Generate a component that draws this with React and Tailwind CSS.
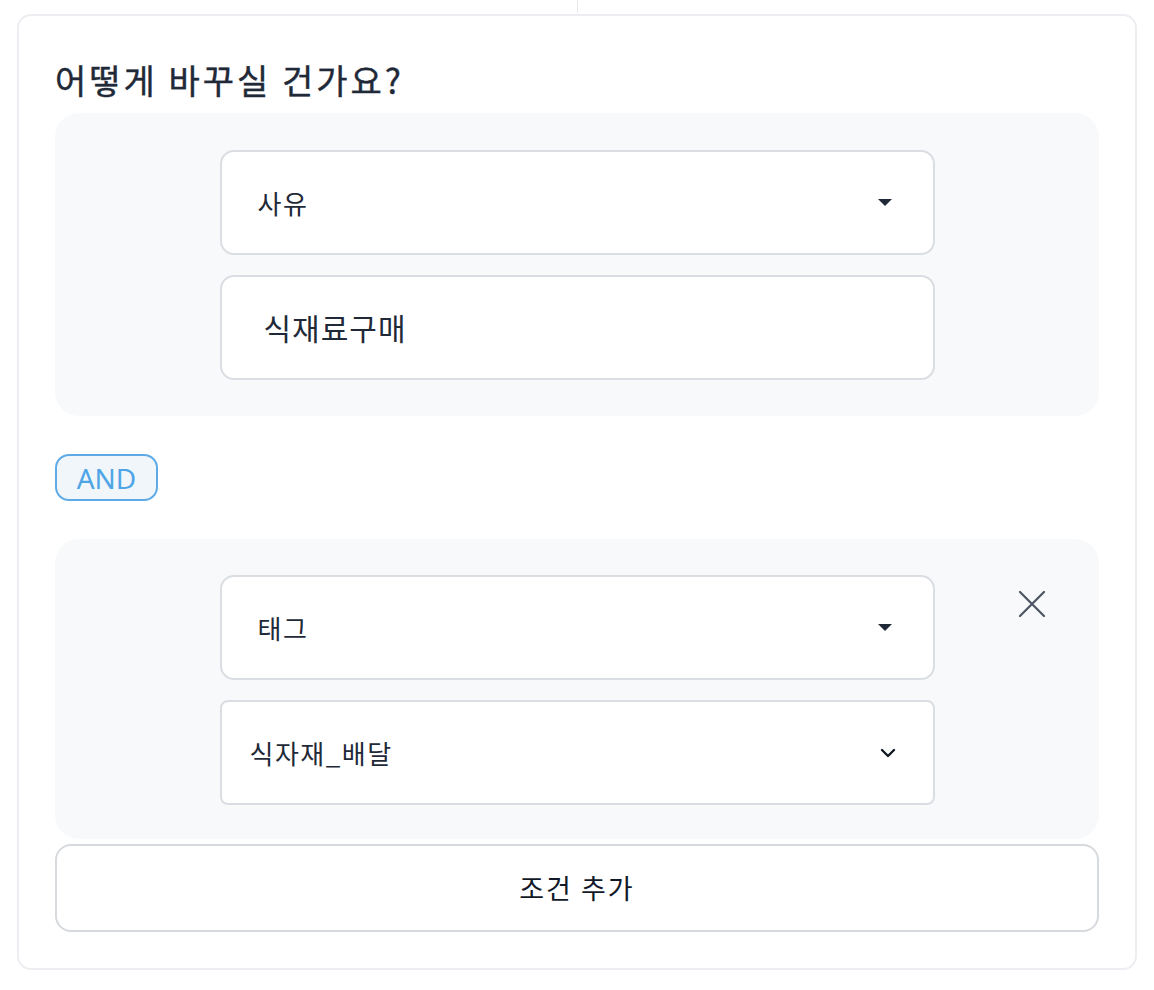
import React from "react";

const KR = { fontFamily: '"Noto Sans CJK KR", "Noto Sans", sans-serif' };

function Caret() {
  return (
    <svg width="16" height="9" viewBox="0 0 16 9" className="shrink-0">
      <path d="M1 1h14L8 8z" fill="#1f2937" />
    </svg>
  );
}

function Chevron() {
  return (
    <svg width="18" height="12" viewBox="0 0 18 12" className="shrink-0">
      <path d="M3 3l6 6 6-6" fill="none" stroke="#111827" strokeWidth="2.4" strokeLinecap="round" strokeLinejoin="round" />
    </svg>
  );
}

function SelectBox({ label }) {
  return (
    <div className="flex h-[105px] items-center justify-between rounded-[14px] border-2 border-[#dadde2] bg-white pl-[36px] pr-[40px]">
      <span className="text-[26px] tracking-[1.5px] text-[#1f2937]">{label}</span>
      <Caret />
    </div>
  );
}

export default function App() {
  return (
    <div className="min-h-[990px] bg-white pb-[20px]" style={KR}>
      <div className="flex justify-center">
        <div className="h-[13px] w-px bg-[#e5e7eb]" />
      </div>
      <div className="mx-[17px] mt-px rounded-[14px] border-2 border-[#eceef1] px-[36px] pb-[36px] pt-[46px]">
        <div className="text-[34px] leading-[36px] tracking-[3px] text-[#1f2937] [-webkit-text-stroke:0.4px_#1f2937]">
          어떻게 바꾸실 건가요?
        </div>

        <div className="mt-[15px] rounded-[24px] bg-[#f8f9fb] pb-[36px] pt-[37px]">
          <div className="mx-auto flex w-[715px] flex-col gap-[20px]">
            <SelectBox label="사유" />
            <div className="flex h-[105px] items-center rounded-[14px] border-2 border-[#dadde2] bg-white pl-[42px]">
              <span className="text-[30px] tracking-[1px] text-[#1f2937]">식재료구매</span>
            </div>
          </div>
        </div>

        <div className="mt-[38px] flex">
          <span
            className="flex h-[47px] w-[103px] items-center justify-center rounded-[14px] border-2 border-[#5eaae6] bg-[#f1f6fb] text-[28px] text-[#4ea5e6]"
            style={{ fontFamily: '"Noto Sans", Inter, sans-serif' }}
          >
            AND
          </span>
        </div>

        <div className="relative mt-[38px] rounded-[24px] bg-[#f8f9fb] pb-[34px] pt-[36px]">
          <div className="mx-auto flex w-[715px] flex-col gap-[20px]">
            <SelectBox label="태그" />
            <div className="flex h-[105px] items-center justify-between rounded-[8px] border-2 border-[#dadde2] bg-white pl-[28px] pr-[36px]">
              <span className="text-[26px] tracking-[1.5px] text-[#1f2937]">식자재_배달</span>
              <Chevron />
            </div>
          </div>
          <button className="absolute right-[53px] top-[51px] p-0">
            <svg width="28" height="28" viewBox="0 0 28 28">
              <path d="M2 2l24 24M26 2L2 26" stroke="#4b5563" strokeWidth="2.2" strokeLinecap="round" />
            </svg>
          </button>
        </div>

        <button className="mt-[5px] flex h-[88px] w-full items-center justify-center rounded-[16px] border-2 border-[#d6d9de] bg-white text-[27px] tracking-[2px] text-[#111827]">
          조건 추가
        </button>
      </div>
    </div>
  );
}
